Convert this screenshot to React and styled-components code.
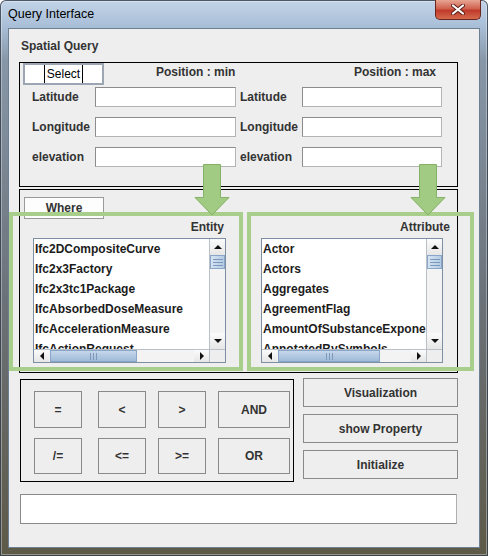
import React from 'react'
import styled, { createGlobalStyle } from 'styled-components'

const GlobalStyle = createGlobalStyle`
  html, body { margin: 0; padding: 0; background: #fff; }
  body {
    width: 488px;
    height: 556px;
    overflow: hidden;
    font-family: "Liberation Sans", Arial, sans-serif;
  }
  * { box-sizing: border-box; }
`

const Frame = styled.div`
  position: relative;
  width: 488px;
  height: 556px;
  display: flex;
  flex-direction: column;
  border-radius: 6px 6px 0 0;
  background: linear-gradient(to bottom, #c3d4e8 0, #a9bfd8 26px, #8797a8 60px, #6b7178 300px, #5e5a48 100%);
  box-shadow: inset 0 0 0 1px rgba(30, 40, 55, 0.75), inset 0 0 0 2px rgba(255, 255, 255, 0.35);
`

const TitleBar = styled.div`
  height: 28px;
  display: flex;
  justify-content: space-between;
  align-items: flex-start;
  padding-left: 8px;
`

const Title = styled.span`
  font-size: 12.5px;
  line-height: 28px;
  color: #000;
`

const CloseButton = styled.div`
  width: 46px;
  height: 20px;
  margin-right: 7px;
  border: 1px solid #6a251d;
  border-top: none;
  border-radius: 0 0 5px 5px;
  background: linear-gradient(to bottom, #e8a593 0, #d0614f 45%, #bf3a2a 55%, #d66a4d 100%);
  display: flex;
  align-items: center;
  justify-content: center;
`

const Client = styled.div`
  flex: 1;
  margin: 0 8px 8px 8px;
  background: #eeeeee;
  border: 1px solid #6d7f93;
  padding: 9px 0 0 10px;
  display: flex;
  flex-direction: column;
`

const Heading = styled.div`
  margin-left: 2px;
  font-size: 12px;
  font-weight: bold;
  line-height: 16px;
  color: #333;
`

const Panel = styled.div`
  width: 439px;
  height: ${p => p.$h}px;
  margin-top: ${p => p.$top}px;
  border: 1px solid #000;
`

const PanelHeader = styled.div`
  display: flex;
  height: 22px;
`

const SelectTab = styled.div`
  width: 81px;
  height: 22px;
  margin-left: 3px;
  background: #fff;
  border: 2px solid #9ba6b2;
  display: flex;
  justify-content: center;
`

const SelectText = styled.span`
  border-left: 1px solid #000;
  border-right: 1px solid #000;
  padding: 0 2px;
  font-size: 12px;
  line-height: 18px;
  color: #000;
`

const PosLabel = styled.span`
  width: ${p => p.$w}px;
  margin-left: ${p => p.$ml}px;
  font-size: 12px;
  font-weight: bold;
  line-height: 18px;
  color: #333;
`

const CoordGrid = styled.div`
  display: grid;
  grid-template-columns: 63px 141px 66px 140px;
  grid-auto-rows: 20px;
  row-gap: 10px;
  margin: 2px 0 0 12px;
`

const FieldLabel = styled.span`
  display: flex;
  align-items: center;
  padding-left: ${p => (p.$right ? 4 : 0)}px;
  font-size: 12px;
  font-weight: bold;
  color: #333;
`

const TextInput = styled.div`
  background: #fff;
  border: 1px solid #8c8c8c;
  border-right-color: #b4b4b4;
  border-bottom-color: #b4b4b4;
`

const WhereTab = styled.div`
  width: 80px;
  height: 22px;
  margin: 7px 0 0 4px;
  background: #fdfdfd;
  border: 1px solid #9a9a9a;
  text-align: center;
  font-size: 12px;
  font-weight: bold;
  line-height: 20px;
  color: #333;
`

const Columns = styled.div`
  display: grid;
  grid-template-columns: 193px 189px;
  column-gap: 35px;
  margin-left: 13px;
`

const Column = styled.div`
  display: flex;
  flex-direction: column;
`

const ColumnLabel = styled.div`
  height: 16px;
  margin-bottom: 3px;
  padding-right: ${p => p.$pr}px;
  text-align: right;
  font-size: 12px;
  font-weight: bold;
  line-height: 16px;
  color: #333;
`

const ListBox = styled.div`
  width: ${p => p.$w}px;
  height: 125px;
  background: #fff;
  border: 1px solid #7d8fa3;
  display: grid;
  grid-template-columns: 1fr 16px;
  grid-template-rows: 1fr 13px;
`

const Viewport = styled.div`
  overflow: hidden;
`

const Item = styled.div`
  padding-left: 1px;
  font-size: 12px;
  font-weight: bold;
  line-height: 20px;
  color: #1c1c1c;
  white-space: nowrap;
`

const VBar = styled.div`
  display: flex;
  flex-direction: column;
  background: #f3f3f3;
  border-left: 1px solid #b9c0c8;
`

const HBar = styled.div`
  display: flex;
  background: #f3f3f3;
  border-top: 1px solid #b9c0c8;
`

const ArrowBtn = styled.div`
  flex: none;
  width: ${p => (p.$v ? '100%' : '15px')};
  height: ${p => (p.$v ? '16px' : '100%')};
  background: linear-gradient(to bottom, #fbfbfb, #e6e6e6);
  display: flex;
  align-items: center;
  justify-content: center;
`

const Tri = styled.span`
  width: 0;
  height: 0;
  border-style: solid;
  ${p => p.$dir === 'up' && 'border-width: 0 4px 4px 4px; border-color: transparent transparent #111 transparent;'}
  ${p => p.$dir === 'down' && 'border-width: 4px 4px 0 4px; border-color: #111 transparent transparent transparent;'}
  ${p => p.$dir === 'left' && 'border-width: 4px 4px 4px 0; border-color: transparent #111 transparent transparent;'}
  ${p => p.$dir === 'right' && 'border-width: 4px 0 4px 4px; border-color: transparent transparent transparent #111;'}
`

const Track = styled.div`
  flex: 1;
`

const Thumb = styled.div`
  flex: none;
  width: ${p => (p.$v ? '100%' : `${p.$size}px`)};
  height: ${p => (p.$v ? `${p.$size}px` : '100%')};
  margin-left: ${p => (p.$v ? 0 : 1)}px;
  background: ${p => (p.$v
    ? 'linear-gradient(to right, #d6e4f2, #b3cbe4)'
    : 'linear-gradient(to bottom, #c5d7ea, #9fbad8)')};
  border: 1px solid #89a6c8;
  display: flex;
  flex-direction: ${p => (p.$v ? 'column' : 'row')};
  align-items: center;
  justify-content: center;
  gap: 2px;
`

const Grip = styled.span`
  background: #7c98bb;
  width: ${p => (p.$v ? '10px' : '1px')};
  height: ${p => (p.$v ? '1px' : '7px')};
`

const Corner = styled.div`
  background: #eeeeee;
  border-top: 1px solid #b9c0c8;
  border-left: 1px solid #b9c0c8;
`

const BottomRow = styled.div`
  display: flex;
  align-items: flex-start;
  margin-top: 5px;
`

const OpPanel = styled.div`
  width: 274px;
  height: 103px;
  margin: 1px 0 0 1px;
  border: 1px solid #000;
  padding: 11px 0 0 13px;
  display: grid;
  grid-template-columns: 64px 60px 60px 72px;
  grid-template-rows: 37px 36px;
  row-gap: 10px;
`

const Button = styled.div`
  width: ${p => p.$w || '100%'};
  height: ${p => p.$h || '100%'};
  background: #eeeeee;
  border: 1px solid #8a8a8a;
  display: flex;
  align-items: center;
  justify-content: center;
  font-size: 12px;
  font-weight: bold;
  color: #333;
`

const ActionColumn = styled.div`
  width: 155px;
  margin-left: 9px;
  display: flex;
  flex-direction: column;
  gap: 7px;
`

const StatusField = styled.div`
  width: 437px;
  height: 30px;
  margin: 12px 0 0 1px;
  background: #fff;
  border: 1px solid #8a8a8a;
  border-right-color: #b0b0b0;
`

const Highlight = styled.div`
  position: absolute;
  left: ${p => p.$x}px;
  top: 212px;
  width: ${p => p.$w}px;
  height: 159px;
  border: 4px solid #a7cf8b;
  pointer-events: none;
`

const ArrowSvg = styled.svg`
  position: absolute;
  left: ${p => p.$x}px;
  top: 164px;
`

const entities = [
  'Ifc2DCompositeCurve',
  'Ifc2x3Factory',
  'Ifc2x3tc1Package',
  'IfcAbsorbedDoseMeasure',
  'IfcAccelerationMeasure',
  'IfcActionRequest',
]

const attributes = [
  'Actor',
  'Actors',
  'Aggregates',
  'AgreementFlag',
  'AmountOfSubstanceExponent',
  'AnnotatedBySymbols',
]

const ScrollList = ({ items, width, thumb }) => (
  <ListBox $w={width}>
    <Viewport>
      {items.map(it => <Item key={it}>{it}</Item>)}
    </Viewport>
    <VBar>
      <ArrowBtn $v><Tri $dir="up" /></ArrowBtn>
      <Thumb $v $size={14}>
        <Grip $v /><Grip $v /><Grip $v />
      </Thumb>
      <Track />
      <ArrowBtn $v><Tri $dir="down" /></ArrowBtn>
    </VBar>
    <HBar>
      <ArrowBtn><Tri $dir="left" /></ArrowBtn>
      <Thumb $size={thumb}>
        <Grip /><Grip /><Grip />
      </Thumb>
      <Track />
      <ArrowBtn><Tri $dir="right" /></ArrowBtn>
    </HBar>
    <Corner />
  </ListBox>
)

const DownArrow = ({ x }) => (
  <ArrowSvg $x={x} width="36" height="52" viewBox="0 0 36 52">
    <path d="M9.5 0.5 H26.5 V33.5 H35 L18 51 L1 33.5 H9.5 Z" fill="#a1cb83" stroke="#85b267" strokeWidth="1" />
  </ArrowSvg>
)

const rows = [
  ['Latitude', 'Latitude'],
  ['Longitude', 'Longitude'],
  ['elevation', 'elevation'],
]

export default function App() {
  return (
    <>
      <GlobalStyle />
      <Frame>
        <TitleBar>
          <Title>Query Interface</Title>
          <CloseButton>
            <svg width="14" height="11" viewBox="0 0 14 11">
              <path d="M2 1.5 L12 9.5 M12 1.5 L2 9.5" stroke="#5a1e17" strokeWidth="4" strokeLinecap="round" />
              <path d="M2 1.5 L12 9.5 M12 1.5 L2 9.5" stroke="#fff" strokeWidth="2.2" strokeLinecap="round" />
            </svg>
          </CloseButton>
        </TitleBar>

        <Client>
          <Heading>Spatial Query</Heading>

          <Panel $h={125} $top={8}>
            <PanelHeader>
              <SelectTab><SelectText>Select</SelectText></SelectTab>
              <PosLabel $w={198} $ml={52}>Position : min</PosLabel>
              <PosLabel $w={90} $ml={0}>Position : max</PosLabel>
            </PanelHeader>
            <CoordGrid>
              {rows.map(([a, b]) => (
                <React.Fragment key={a}>
                  <FieldLabel>{a}</FieldLabel>
                  <TextInput />
                  <FieldLabel $right>{b}</FieldLabel>
                  <TextInput />
                </React.Fragment>
              ))}
            </CoordGrid>
          </Panel>

          <Panel $h={184} $top={2}>
            <WhereTab>Where</WhereTab>
            <Columns>
              <Column>
                <ColumnLabel $pr={2}>Entity</ColumnLabel>
                <ScrollList items={entities} width={193} thumb={87} />
              </Column>
              <Column>
                <ColumnLabel $pr={0}>Attribute</ColumnLabel>
                <ScrollList items={attributes} width={182} thumb={102} />
              </Column>
            </Columns>
          </Panel>

          <BottomRow>
            <OpPanel>
              <Button $w="48px">=</Button>
              <Button $w="48px">{'<'}</Button>
              <Button $w="48px">{'>'}</Button>
              <Button>AND</Button>
              <Button $w="48px">/=</Button>
              <Button $w="48px">{'<='}</Button>
              <Button $w="48px">{'>='}</Button>
              <Button>OR</Button>
            </OpPanel>
            <ActionColumn>
              <Button $h="29px">Visualization</Button>
              <Button $h="29px">show Property</Button>
              <Button $h="29px">Initialize</Button>
            </ActionColumn>
          </BottomRow>

          <StatusField />
        </Client>

        <Highlight $x={9} $w={234} />
        <Highlight $x={247} $w={227} />
        <DownArrow x={194} />
        <DownArrow x={410} />
      </Frame>
    </>
  )
}
